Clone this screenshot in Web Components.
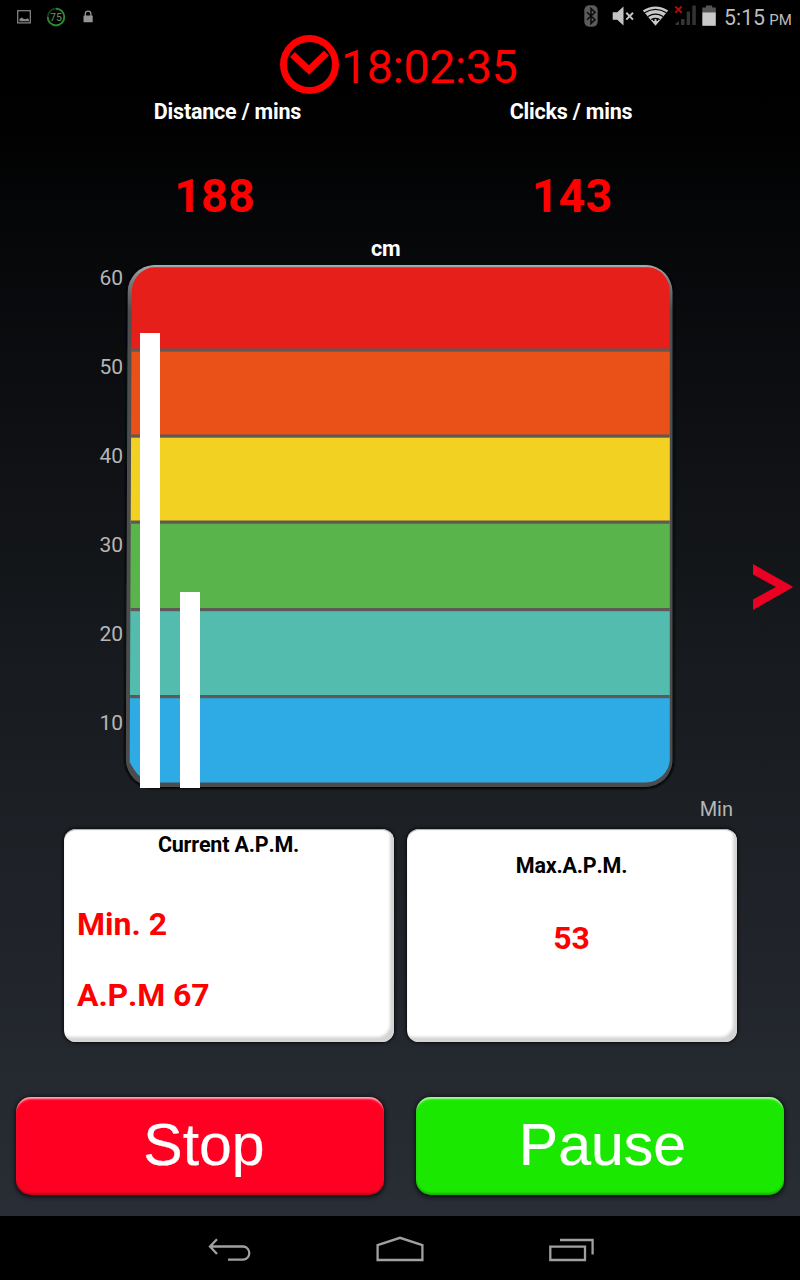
<!DOCTYPE html>
<html lang="en">
<head>
<meta charset="utf-8">
<title>A.P.M. Monitor</title>
<style>
  html, body { margin: 0; background: #000; }
  body { width: 800px; height: 1280px; overflow: hidden; font-family: Roboto, "Noto Sans", sans-serif; font-kerning: none; }
</style>
</head>
<body>
<apm-app></apm-app>

<script>
// ============================================================
// <status-bar>: notification icons on the left, system on the right
// ============================================================
class StatusBar extends HTMLElement {
  constructor() {
    super();
    this.attachShadow({ mode: "open" });
  }

  connectedCallback() {
    this.shadowRoot.innerHTML = `
      <style>
        :host { display: flex; justify-content: space-between; height: 33px; background: #000; color: #bdbdbd; }
        svg { display: block; }
        .right { display: flex; }
        .time { width: 81px; box-sizing: border-box; padding-left: 5px; line-height: 35px; font-size: 21.3px; white-space: nowrap; }
        .time small { margin-left: -1px; font-size: 15px; }
        text { font-family: Roboto, sans-serif; }
      </style>
      <svg width="110" height="33">
        <rect x="17.7" y="10.7" width="12.6" height="12.2" fill="none" stroke="#8a8a8a" stroke-width="1.2"/>
        <path d="M19.5 21.3v-2.2l2.2-1.7 1.8 1.3 2 .5 2-1 1.5 1.5v1.6z" fill="#8a8a8a"/>
        <circle cx="56" cy="17" r="8.3" fill="none" stroke="#14431a" stroke-width="1.7"/>
        <path d="M56 8.7A8.3 8.3 0 1 1 47.7 17" fill="none" stroke="#2c8c34" stroke-width="1.7"/>
        <text x="56" y="20.8" font-size="10.5" text-anchor="middle" fill="#5f9a64">75</text>
        <path d="M85.3 16v-2a2.8 2.8 0 0 1 5.6 0v2" fill="none" stroke="#949494" stroke-width="1.3"/>
        <rect x="83.5" y="15.5" width="9.2" height="6.8" rx=".6" fill="#949494"/>
      </svg>
      <div class="right">
        <svg width="146" height="33" viewBox="573 0 146 33">
          <rect x="584.3" y="5.3" width="13.4" height="21.4" rx="5" fill="#5b5b5b"/>
          <path d="M587 12.2l8 7.6-4 3.8V8.4l4 3.8-8 7.6" fill="none" stroke="#0b0b0b" stroke-width="1.5"/>
          <path d="M612.7 12.3h4.5l6.3-5.8v19l-6.3-5.8h-4.5z" fill="#c3c3c3"/>
          <path d="M626.3 12.7l6.7 6.9m0-6.9l-6.7 6.9" stroke="#c3c3c3" stroke-width="2" fill="none"/>
          <path d="M655.5 25.7L642.8 10.4Q655.5 2.4 668.2 10.4z" fill="#c9c9c9"/>
          <path d="M644.5 12.8Q655.5 5.8 666.5 12.8M648 16.5Q655.5 11.8 663 16.5M651.3 19.6Q655.5 17.3 659.7 19.6" fill="none" stroke="#000" stroke-width="1.3"/>
          <path d="M653 18.5h1.5v2.5h-1.5zM656.5 18.5h1.5v2.5h-1.5z" fill="#000"/>
          <path d="M675.5 25v-1.5l3.5-2.5v4zM681 25v-6h3.5v6zM686.7 25V11.5h3.3V25zM692.3 25V5.5h3.5V25z" fill="#343434"/>
          <path d="M675.3 6.5l6.4 6.3m0-6.3l-6.4 6.3" stroke="#a31212" stroke-width="1.9" fill="none"/>
          <path d="M702.3 12.3V7.5h3.6V5.4h6.3v2.1h3.6v4.8z" fill="#555"/>
          <rect x="702.3" y="12.3" width="13.5" height="13.5" fill="#c9c9c9"/>
        </svg>
        <div class="time">5:15 <small>PM</small></div>
      </div>
    `;
  }
}
customElements.define("status-bar", StatusBar);

// ============================================================
// <session-clock>: elapsed time with the round clock icon
// ============================================================
class SessionClock extends HTMLElement {
  constructor() {
    super();
    this.attachShadow({ mode: "open" });
    this.shadowRoot.innerHTML = `
      <style>
        :host { display: flex; gap: 1px; height: 60px; padding: 2px 0 0 280px; color: #f00; font-size: 46.67px; line-height: 65px; letter-spacing: -.45px; }
        svg { display: block; }
      </style>
      <svg width="60" height="60" fill="none" stroke="#f00">
        <circle cx="29.5" cy="29.5" r="26" stroke-width="7"/>
        <path d="M12.5 19.5L29 35L46.5 18" stroke-width="7"/>
      </svg>
      <span><slot></slot></span>
    `;
  }
}
customElements.define("session-clock", SessionClock);

// ============================================================
// <rate-stat>: bold caption over a large red number
// ============================================================
class RateStat extends HTMLElement {
  constructor() {
    super();
    this.attachShadow({ mode: "open" });
  }

  connectedCallback() {
    this.shadowRoot.innerHTML = `
      <style>
        :host { display: flex; flex-direction: column; align-items: center; font-weight: bold; white-space: nowrap; }
        .label { font-size: 21.5px; letter-spacing: -.2px; line-height: 30px; color: #fff; }
        .value { margin-top: 39px; padding: 0 var(--value-shift, 0px) 0 2px; font-size: 46.67px; line-height: 60px; color: #f00; }
      </style>
      <div class="label">${this.getAttribute("label")}</div>
      <div class="value"><slot></slot></div>
    `;
  }
}
customElements.define("rate-stat", RateStat);

// ============================================================
// <band-chart>: six coloured bands, white bars, scale in cm
// ============================================================
class BandChart extends HTMLElement {
  constructor() {
    super();
    this.attachShadow({ mode: "open" });
  }

  connectedCallback() {
    const ticks = [60, 50, 40, 30, 20, 10];
    const colors = ["#e61f1a", "#e95119", "#f3d122", "#59b44c", "#54bcae", "#2eabe5"];
    // band edges, in the svg's own units
    const edges = [265, 350, 436, 522, 609.5, 696.5, 784];
    const bars = this.getAttribute("bars").split(",").map(Number);

    this.shadowRoot.innerHTML = `
      <style>
        :host { display: grid; grid-template-columns: 123px 557px 1fr; height: 528px; color: #b6b6b6; font-size: 21px; }
        .axis { display: flex; flex-direction: column; padding-top: 1px; text-align: right; }
        .axis span { flex: none; height: 89px; line-height: 26px; }
        .axis span:last-child { height: 26px; }
        svg { display: block; }
        .next { display: flex; flex-direction: column; justify-content: flex-end; align-items: flex-end; padding: 0 6px 182px 0; }
      </style>
      <div class="axis">${ticks.map((t) => `<span>${t}</span>`).join("")}</div>
      <svg width="557" height="528" viewBox="123 264 557 528">
        <defs>
          <linearGradient id="rim" x1="0" y1="0" x2="0" y2="1">
            <stop offset="0" stop-color="#aaa"/>
            <stop offset=".035" stop-color="#777"/>
            <stop offset=".09" stop-color="#4e4e4e"/>
            <stop offset="1" stop-color="#4c4c4c"/>
          </linearGradient>
          <filter id="shade" x="-5%" y="-5%" width="110%" height="110%"><feGaussianBlur stdDeviation="1.3"/></filter>
          <clipPath id="plot">
            <path d="M154 267.3H648A22 24 0 0 1 669.8 292V759A24 24 0 0 1 646 782.5H153Q139 781 129.7 762L131.7 292A23 25 0 0 1 154 267.3z"/>
          </clipPath>
        </defs>
        <path d="M154 265H646A27 27 0 0 1 673 292V760A27 27.5 0 0 1 646 787.5H153A28 28 0 0 1 125.5 760L127.5 292A27 27 0 0 1 154 265z" fill="#060708" stroke="#060708" stroke-width="2.5" filter="url(#shade)"/>
        <path d="M154 265H646A27 27 0 0 1 672.5 292V760A27 27 0 0 1 646 787H153A28 28 0 0 1 125.8 760L127.7 292A27 27 0 0 1 154 265z" fill="url(#rim)"/>
        <g clip-path="url(#plot)">
          ${colors.map((c, i) => `<rect x="123" y="${edges[i]}" width="557" height="${edges[i + 1] - edges[i] + 1}" fill="${c}"/>`).join("")}
          ${edges.slice(1, 6).map((y) => `<rect x="123" y="${y - 1.5}" width="557" height="3.2" fill="#5d5a55"/>`).join("")}
        </g>
        ${bars.map((top, i) => `<rect x="${140 + i * 40}" y="${top}" width="20" height="${788 - top}" fill="#fff"/>`).join("")}
      </svg>
      <div class="next">
        <svg width="42" height="46" viewBox="752 564 42 46"><path d="M753 564L792.5 586.5V587.5L753 610V599.5L776 587L753 574.5z" fill="#e90022"/></svg>
      </div>
    `;
  }
}
customElements.define("band-chart", BandChart);

// ============================================================
// <apm-card>: white bevelled panel
// ============================================================
class ApmCard extends HTMLElement {
  constructor() {
    super();
    this.attachShadow({ mode: "open" });
  }

  connectedCallback() {
    this.shadowRoot.innerHTML = `
      <style>
        :host {
          display: block;
          box-sizing: border-box;
          height: 213px;
          border-radius: 12px;
          background: #fff;
          box-shadow: inset -5px -6px 3px -1px #d4d4d4, inset 0 1px 1px #aaa, 0 0 3px 1px #0a0b0d;
          color: #f00;
          font-size: 32px;
          font-weight: bold;
        }
        .title { padding-right: 1px; color: #000; font-size: 21.5px; letter-spacing: -.2px; line-height: 32px; text-align: center; }
      </style>
      <div class="title">${this.getAttribute("heading")}</div>
      <slot></slot>
    `;
  }
}
customElements.define("apm-card", ApmCard);

// ============================================================
// <push-button>: glossy button, colour from --face
// ============================================================
class PushButton extends HTMLElement {
  constructor() {
    super();
    this.attachShadow({ mode: "open" });
    this.shadowRoot.innerHTML = `
      <style>
        :host { display: block; height: 98px; }
        button {
          width: 100%;
          height: 100%;
          padding: 0 0 3px var(--nudge, 0px);
          border: 0;
          border-radius: 15px;
          background: var(--face);
          box-shadow: inset 0 3px 2px -1px rgba(255,255,255,.65), inset 0 -2px 2px rgba(0,0,0,.22), 0 1px 4px 1px #0c0e10;
          color: #fff;
          font: 59px "Liberation Sans", sans-serif;
          -webkit-text-stroke: .2px #fff;
        }
      </style>
      <button><slot></slot></button>
    `;
  }
}
customElements.define("push-button", PushButton);

// ============================================================
// <nav-bar>: back, home, recent apps
// ============================================================
class NavBar extends HTMLElement {
  constructor() {
    super();
    this.attachShadow({ mode: "open" });
    this.shadowRoot.innerHTML = `
      <style>
        :host { display: flex; justify-content: space-between; box-sizing: border-box; height: 64px; padding: 17px 204px 0 206px; background: #000; }
        svg { display: block; fill: none; stroke: #a0a0a0; stroke-width: 2.3; }
      </style>
      <svg width="48" height="32" viewBox="206 1233 48 32"><path d="M217 1239.3L210 1246.5L217 1254M210 1246.5H243.5A6.6 6.6 0 0 1 243.5 1259.6H228"/></svg>
      <svg width="50" height="32" viewBox="376 1233 50 32"><path d="M377.6 1260V1245.2L400 1237.8L422.4 1245.2V1260z"/></svg>
      <svg width="48" height="32" viewBox="548 1233 48 32"><path d="M550.3 1246.6H585V1260H550.3zM560 1240H592.6V1254.5"/></svg>
    `;
  }
}
customElements.define("nav-bar", NavBar);

// ============================================================
// <apm-app>: the whole screen
// ============================================================
class ApmApp extends HTMLElement {
  constructor() {
    super();
    this.attachShadow({ mode: "open" });
    this.shadowRoot.innerHTML = `
      <style>
        :host { display: flex; flex-direction: column; height: 1280px; }
        main { height: 1183px; background: linear-gradient(#000 0%, #010101 8%, #060709 17%, #181b1f 55%, #292d35 100%); }
        .stats { display: grid; grid-template-columns: 455px 232px; height: 137px; padding-top: 2px; }
        .stats rate-stat:first-child { --value-shift: 28px; }
        .unit { height: 30px; padding-left: 371px; color: #fff; font-size: 21.5px; font-weight: bold; letter-spacing: -.2px; line-height: 30px; }
        .minutes { height: 37px; padding-right: 67px; color: #b6b6b6; font-size: 20px; line-height: 35px; text-align: right; }
        .cards { display: grid; grid-template-columns: 330px 330px; gap: 13px; padding-left: 64px; }
        .line { padding-left: 13px; line-height: 40px; }
        .minute { margin-top: 43px; }
        .apm { margin-top: 31px; letter-spacing: -.1px; }
        .max { box-sizing: border-box; padding-top: 21px; }
        .peak { margin-top: 36px; padding-right: 1px; line-height: 40px; text-align: center; }
        .actions { display: grid; grid-template-columns: 368px 368px; gap: 32px; padding: 55px 16px 0; }
        .stop { --face: #ff0023; --nudge: 8px; }
        .pause { --face: #1be800; --nudge: 5px; }
      </style>
      <status-bar></status-bar>
      <main>
        <session-clock>18:02:35</session-clock>
        <div class="stats">
          <rate-stat label="Distance / mins">188</rate-stat>
          <rate-stat label="Clicks / mins">143</rate-stat>
        </div>
        <div class="unit">cm</div>
        <band-chart bars="333,592"></band-chart>
        <div class="minutes">Min</div>
        <div class="cards">
          <apm-card heading="Current A.P.M.">
            <div class="line minute">Min. 2</div>
            <div class="line apm">A.P.M 67</div>
          </apm-card>
          <apm-card class="max" heading="Max.A.P.M.">
            <div class="peak">53</div>
          </apm-card>
        </div>
        <div class="actions">
          <push-button class="stop">Stop</push-button>
          <push-button class="pause">Pause</push-button>
        </div>
      </main>
      <nav-bar></nav-bar>
    `;
  }
}
customElements.define("apm-app", ApmApp);
</script>
</body>
</html>
